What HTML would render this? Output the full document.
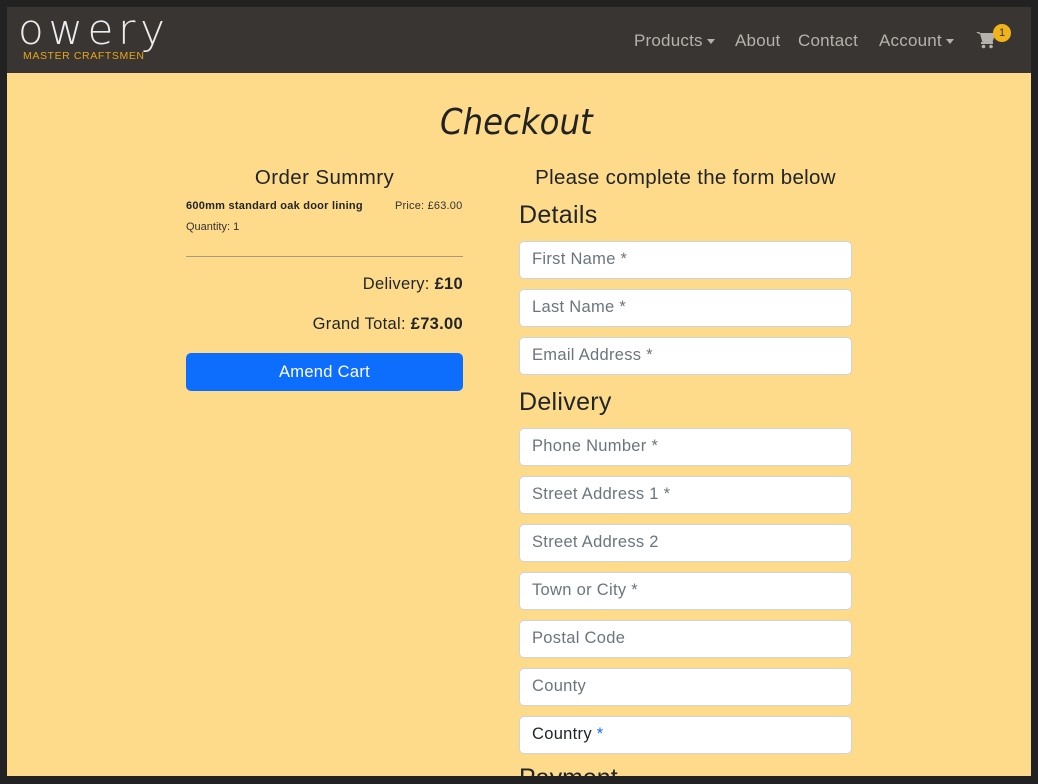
<!DOCTYPE html>
<html><head><meta charset="utf-8"><style>
*{box-sizing:border-box;margin:0;padding:0}
html,body{width:1038px;height:784px;overflow:hidden}
body{background:#222;position:relative;font-family:"Liberation Sans",sans-serif;color:#212529}
.nav{position:absolute;left:7px;top:7px;width:1024px;height:66px;background:#383533}
.main{position:absolute;left:7px;top:73px;width:1024px;height:703px;background:#fedb8a;overflow:hidden}
.a{position:absolute;white-space:nowrap}
.navl{color:#b5b2ad;font-size:17px;top:31px;letter-spacing:.2px}
.caret{display:inline-block;border-left:4.5px solid transparent;border-right:4.5px solid transparent;border-top:5px solid #b5b2ad;vertical-align:middle;margin-left:4px}
.in{position:absolute;left:519px;width:333px;height:38px;background:#fff;border:1px solid #ced4da;border-radius:5px;font-size:16.5px;color:#6c757d;padding:8px 12px;letter-spacing:.3px}
</style></head><body>
<div class="nav"></div>
<svg class="a" style="left:17px;top:10px" width="155" height="50" viewBox="0 0 155 50"><text x="1" y="34" font-family="DejaVu Sans, sans-serif" font-weight="200" font-size="42" textLength="147" lengthAdjust="spacing" fill="#ececec">owery</text></svg>
<div class="a" style="left:23px;top:50px;font-size:10.5px;color:#e8a617;letter-spacing:.6px">MASTER CRAFTSMEN</div>
<div class="a navl" style="left:634px">Products<span class="caret"></span></div>
<div class="a navl" style="left:735px">About</div>
<div class="a navl" style="left:798px">Contact</div>
<div class="a navl" style="left:879px">Account<span class="caret"></span></div>
<svg class="a" style="left:976px;top:31px" width="20" height="18" viewBox="0 0 20 18"><path d="M0 1h3.5l3 10h10l2.5-7H5" fill="#b5b2ad"/><path d="M4 2h15l-2.5 8H6z" fill="#b5b2ad"/><rect x="5" y="11" width="12" height="2" fill="#b5b2ad"/><circle cx="7.5" cy="15.5" r="1.8" fill="#b5b2ad"/><circle cx="15" cy="15.5" r="1.8" fill="#b5b2ad"/></svg>
<div class="a" style="left:993px;top:24px;width:18px;height:18px;border-radius:50%;background:#f0b41a;color:#333;font-size:11px;text-align:center;line-height:18px">1</div>
<div class="main"></div>
<div class="a" style="left:440px;top:102px;font-size:36px;font-style:italic;font-family:'DejaVu Sans',sans-serif;color:#222;letter-spacing:0px;transform:scaleX(.9);transform-origin:left">Checkout</div>
<div class="a" style="left:186px;width:277px;text-align:center;top:166px;font-size:20.5px;letter-spacing:.4px">Order Summry</div>
<div class="a" style="left:186px;top:200px;font-size:11px;font-weight:bold;letter-spacing:.25px">600mm standard oak door lining</div>
<div class="a" style="left:395px;top:200px;font-size:11px;color:#333;letter-spacing:.2px">Price: £63.00</div>
<div class="a" style="left:186px;top:221px;font-size:11px;color:#333">Quantity: 1</div>
<div class="a" style="left:186px;top:256px;width:277px;height:1px;background:#a89a78"></div>
<div class="a" style="left:186px;width:277px;text-align:right;top:275px;font-size:16.5px;letter-spacing:.3px">Delivery: <b>£10</b></div>
<div class="a" style="left:186px;width:277px;text-align:right;top:315px;font-size:16.5px;letter-spacing:.3px">Grand Total: <b>£73.00</b></div>
<div class="a" style="left:186px;top:353px;width:277px;height:38px;background:#0d6efd;border-radius:5px;color:#fff;font-size:16.5px;text-align:center;line-height:38px;letter-spacing:.3px">Amend Cart</div>
<div class="a" style="left:519px;width:333px;text-align:center;top:166px;font-size:20.5px;letter-spacing:.3px">Please complete the form below</div>
<div class="a" style="left:519px;top:201px;font-size:25px;letter-spacing:.3px">Details</div>
<div class="in" style="top:241px">First Name *</div>
<div class="in" style="top:289px">Last Name *</div>
<div class="in" style="top:337px">Email Address *</div>
<div class="a" style="left:519px;top:388px;font-size:25px;letter-spacing:.3px">Delivery</div>
<div class="in" style="top:428px">Phone Number *</div>
<div class="in" style="top:476px">Street Address 1 *</div>
<div class="in" style="top:524px">Street Address 2</div>
<div class="in" style="top:572px">Town or City *</div>
<div class="in" style="top:620px">Postal Code</div>
<div class="in" style="top:668px">County</div>
<div class="in" style="top:716px;color:#212529">Country <span style="color:#0d6efd">*</span></div>
<div class="a" style="left:519px;top:764px;font-size:25px">Payment</div>
<div class="a" style="left:0;top:776px;width:1038px;height:8px;background:#222"></div>
</body></html>
